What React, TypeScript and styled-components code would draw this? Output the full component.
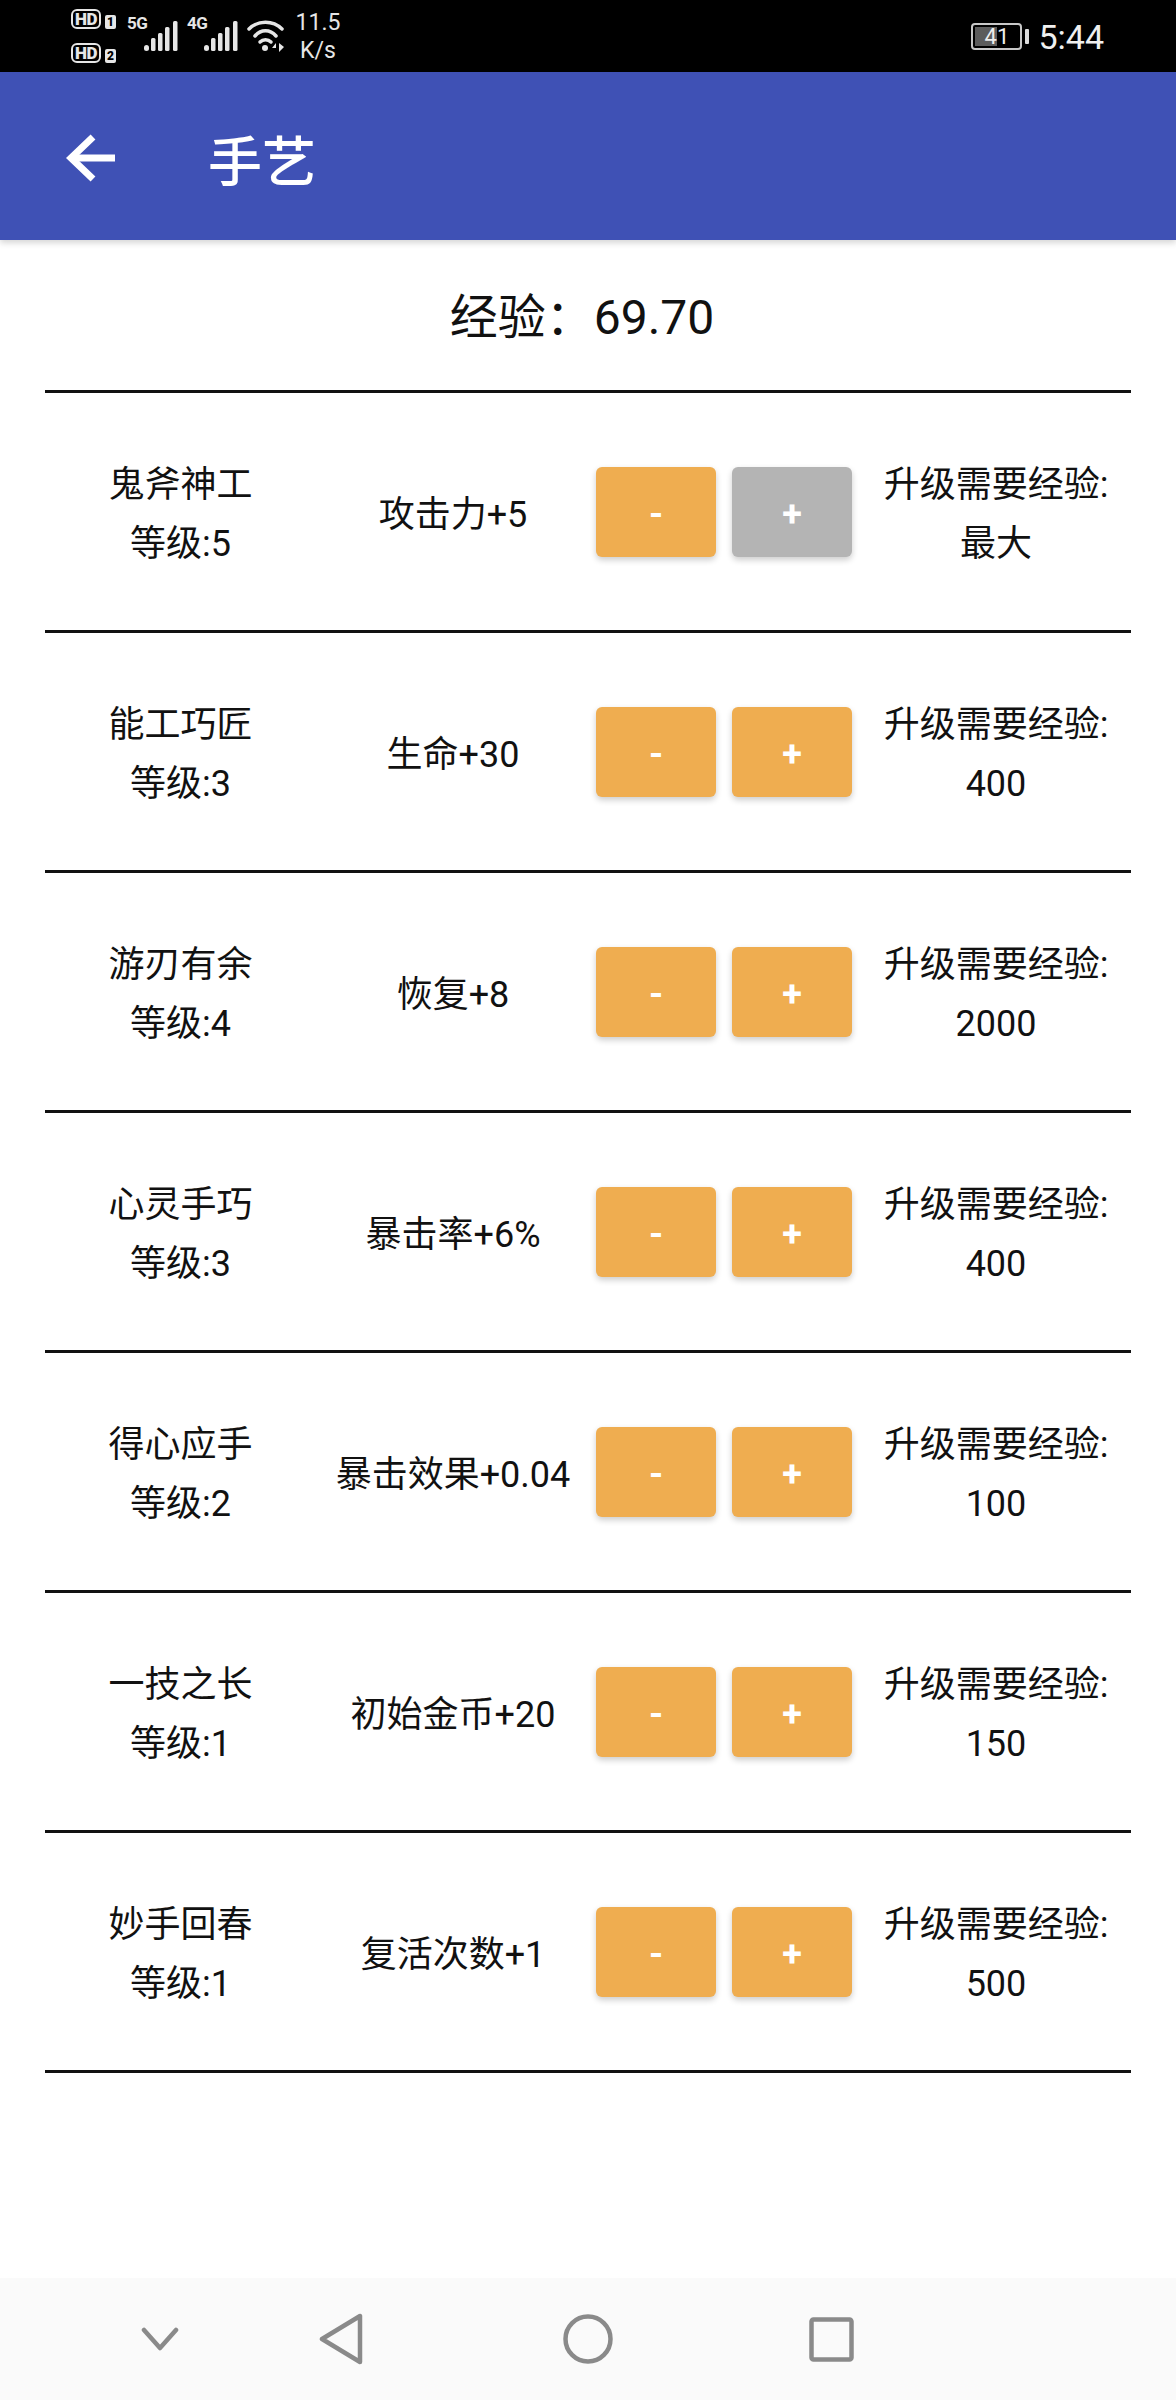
import React from "react";
import styled, { createGlobalStyle } from "styled-components";

const GlobalStyle = createGlobalStyle`
  html, body {
    margin: 0;
    padding: 0;
    background: #fff;
  }
  * {
    box-sizing: border-box;
  }
  body {
    font-family: Roboto, "Noto Sans CJK SC", sans-serif;
    color: #111;
  }
`;

const Page = styled.div`
  width: 1176px;
  height: 2400px;
  display: flex;
  flex-direction: column;
  background: #fff;
`;

const StatusBar = styled.div`
  height: 72px;
  flex: none;
  background: #000;
  color: #e6e6e6;
  display: flex;
  align-items: center;
  padding: 0 72px 0 71px;
`;

const SimColumn = styled.div`
  display: flex;
  flex-direction: column;
  gap: 14px;
  margin-right: 11px;
`;

const SimRow = styled.div`
  display: flex;
  align-items: flex-end;
  gap: 4px;
`;

const HdBadge = styled.span`
  width: 30px;
  height: 20px;
  border: 2px solid #e6e6e6;
  border-radius: 6px;
  font-size: 17px;
  line-height: 16px;
  font-weight: 900;
  letter-spacing: -0.5px;
  text-align: center;
`;

const SimNumber = styled.span`
  width: 11px;
  height: 14px;
  background: #e6e6e6;
  color: #000;
  border-radius: 2px;
  font-size: 12px;
  line-height: 14px;
  font-weight: 900;
  text-align: center;
`;

const Signal = styled.div`
  display: flex;
  align-items: flex-start;
  margin-right: 9px;
`;

const NetLabel = styled.span`
  font-family: "Liberation Sans Narrow", Roboto, sans-serif;
  font-size: 17px;
  line-height: 18px;
  font-weight: 700;
  width: 17px;
  margin-top: -6px;
  letter-spacing: -0.5px;
`;

const Speed = styled.div`
  margin-left: 8px;
  width: 50px;
  font-size: 23px;
  line-height: 28px;
  text-align: center;
  margin-top: 1px;
`;

const Spacer = styled.div`
  flex: 1;
`;

const Battery = styled.div`
  position: relative;
  width: 51px;
  height: 27px;
  border: 2px solid #c8c8c8;
  border-radius: 4px;
  padding: 2px;
  margin-right: 3px;
`;

const BatteryFill = styled.div`
  width: 50%;
  height: 100%;
  background: #5c5c5c;
`;

const BatteryText = styled.span`
  position: absolute;
  inset: 0;
  font-size: 22px;
  line-height: 23px;
  text-align: center;
  color: #eee;
`;

const BatteryNub = styled.div`
  width: 4px;
  height: 15px;
  border-radius: 1px;
  background: #ddd;
  margin-right: 9px;
`;

const Clock = styled.span`
  font-size: 34px;
  color: #f0f0f0;
  margin-top: 2px;
`;

const AppBar = styled.header`
  height: 168px;
  flex: none;
  display: flex;
  align-items: center;
  background: #3f51b5;
  color: #fff;
  padding: 4px 0 0 66px;
  box-shadow: 0 3px 6px rgba(0, 0, 0, 0.16);
  position: relative;
`;

const Title = styled.h1`
  margin: 11px 0 0 92px;
  font-size: 54px;
  font-weight: 500;
  line-height: 1;
`;

const Experience = styled.div`
  height: 150px;
  flex: none;
  display: flex;
  align-items: center;
  justify-content: center;
  font-size: 48px;
  padding: 0 12px 5px 0;
  white-space: pre;
`;

const List = styled.div`
  margin: 0 45px;
  border-top: 3px solid #111;
`;

const Row = styled.div`
  height: 240px;
  display: grid;
  grid-template-columns: 271px 280px 256px 279px;
  align-items: center;
  border-bottom: 3px solid #111;
  font-size: 36px;
  line-height: 59px;
  text-align: center;
`;

const Cell = styled.div`
  display: flex;
  flex-direction: column;
  white-space: nowrap;
  padding-top: 7px;
`;

const EffectCell = styled(Cell)`
  padding-right: 6px;
`;

const CostCell = styled(Cell)`
  padding-left: 9px;
`;

const Actions = styled.div`
  display: flex;
  gap: 16px;
`;

const ActionButton = styled.button<{ $disabled?: boolean }>`
  width: 120px;
  height: 90px;
  padding: 5px 0 0;
  border: 0;
  border-radius: 6px;
  background: ${(p) => (p.$disabled ? "#b4b4b4" : "#efad50")};
  color: #fff;
  font-family: Roboto, sans-serif;
  font-size: 36px;
  font-weight: 700;
  box-shadow: 0 3px 6px rgba(0, 0, 0, 0.2);
`;

const NavBar = styled.nav`
  margin-top: auto;
  height: 122px;
  flex: none;
  display: flex;
  align-items: center;
  background: #fafafa;
  padding-left: 141px;
`;

const NavIcon = styled.svg<{ $gap: number }>`
  display: block;
  margin-right: ${(p) => p.$gap}px;
  fill: none;
  stroke: #8a8a8a;
  stroke-width: 4.5;
  stroke-linejoin: round;
  stroke-linecap: round;
`;

const skills = [
  { name: "鬼斧神工", level: 5, effect: "攻击力+5", cost: "最大", maxed: true },
  { name: "能工巧匠", level: 3, effect: "生命+30", cost: "400" },
  { name: "游刃有余", level: 4, effect: "恢复+8", cost: "2000" },
  { name: "心灵手巧", level: 3, effect: "暴击率+6%", cost: "400" },
  { name: "得心应手", level: 2, effect: "暴击效果+0.04", cost: "100" },
  { name: "一技之长", level: 1, effect: "初始金币+20", cost: "150" },
  { name: "妙手回春", level: 1, effect: "复活次数+1", cost: "500" },
];

const Bars = () => (
  <svg width="34" height="32" viewBox="0 0 34 32" fill="#e6e6e6">
    <rect x="0" y="25" width="5" height="6" rx="2.5" />
    <rect x="7" y="18" width="4.5" height="13" rx="1.5" />
    <rect x="14" y="13" width="4.5" height="18" rx="1.5" />
    <rect x="21" y="7" width="4.5" height="24" rx="1.5" />
    <rect x="29" y="1" width="4.5" height="30" rx="1.5" />
  </svg>
);

const Wifi = () => (
  <svg width="38" height="32" viewBox="0 0 38 32" fill="none" stroke="#e6e6e6" strokeWidth="3.5" strokeLinecap="round">
    <path d="M2 9C11 0 26 0 35 9" />
    <path d="M8 16C14 9 23 9 29 16" />
    <path d="M13 22C16 19 21 19 24 22" />
    <circle cx="18" cy="28" r="3" fill="#e6e6e6" stroke="none" />
    <path d="M29 23l-4 5h4zM32 23v9l5-5z" fill="#e6e6e6" stroke="none" />
  </svg>
);

const BackArrow = () => (
  <svg width="50" height="48" viewBox="0 0 50 48" fill="none" stroke="#fff" strokeWidth="7">
    <path d="M27 3L5 24l22 21" />
    <path d="M5 24h44" />
  </svg>
);

const App = () => (
  <Page>
    <GlobalStyle />
    <StatusBar>
      <SimColumn>
        <SimRow>
          <HdBadge>HD</HdBadge>
          <SimNumber>1</SimNumber>
        </SimRow>
        <SimRow>
          <HdBadge>HD</HdBadge>
          <SimNumber>2</SimNumber>
        </SimRow>
      </SimColumn>
      <Signal>
        <NetLabel>5G</NetLabel>
        <Bars />
      </Signal>
      <Signal>
        <NetLabel>4G</NetLabel>
        <Bars />
      </Signal>
      <Wifi />
      <Speed>
        11.5
        <br />
        K/s
      </Speed>
      <Spacer />
      <Battery>
        <BatteryFill />
        <BatteryText>41</BatteryText>
      </Battery>
      <BatteryNub />
      <Clock>5:44</Clock>
    </StatusBar>
    <AppBar>
      <BackArrow />
      <Title>手艺</Title>
    </AppBar>
    <Experience>{"经验\uff1a69.70"}</Experience>
    <List>
      {skills.map((s) => (
        <Row key={s.name}>
          <Cell>
            <span>{s.name}</span>
            <span>等级:{s.level}</span>
          </Cell>
          <EffectCell>{s.effect}</EffectCell>
          <Actions>
            <ActionButton>-</ActionButton>
            <ActionButton $disabled={s.maxed}>+</ActionButton>
          </Actions>
          <CostCell>
            <span>升级需要经验:</span>
            <span>{s.cost}</span>
          </CostCell>
        </Row>
      ))}
    </List>
    <NavBar>
      <NavIcon $gap={140} width="38" height="24" viewBox="0 0 38 24">
        <path d="M3 3l16 18L35 3" />
      </NavIcon>
      <NavIcon $gap={200} width="44" height="52" viewBox="0 0 44 52">
        <path d="M41 3v46L3 26z" />
      </NavIcon>
      <NavIcon $gap={196} width="50" height="50" viewBox="0 0 50 50">
        <circle cx="25" cy="25" r="22.5" />
      </NavIcon>
      <NavIcon $gap={0} width="45" height="45" viewBox="0 0 45 45">
        <rect x="2.5" y="2.5" width="40" height="40" rx="2" />
      </NavIcon>
    </NavBar>
  </Page>
);

export default App;
